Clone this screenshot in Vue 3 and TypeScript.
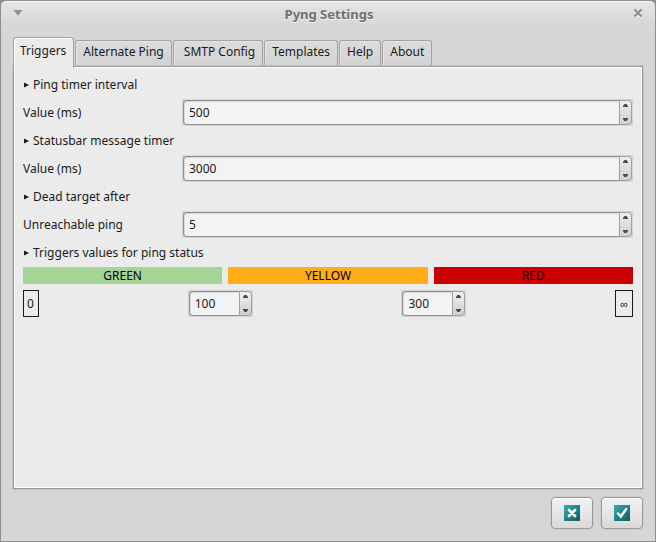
<script setup lang="ts">
import { ref } from 'vue'

interface Setting {
  id: string
  heading: string
  label: string
  value: number
}

const tabs = ['Triggers', 'Alternate Ping', '\u00a0SMTP Config', 'Templates', 'Help', 'About']
const active = ref(tabs[0])

const settings = ref<Setting[]>([
  { id: 'ping-timer', heading: 'Ping timer interval', label: 'Value (ms)', value: 500 },
  { id: 'status-timer', heading: 'Statusbar message timer', label: 'Value (ms)', value: 3000 },
  { id: 'dead-after', heading: 'Dead target after', label: 'Unreachable ping', value: 5 },
])

const thresholds = ref([
  { label: 'Green to yellow threshold', value: 100 },
  { label: 'Yellow to red threshold', value: 300 },
])

function step(item: { value: number }, amount: number) {
  item.value = Math.max(0, item.value + amount)
}
</script>

<template>
  <main class="window">
    <header class="titlebar">
      <button class="title-button" type="button" aria-label="Window menu">
        <svg width="10" height="6" viewBox="0 0 10 6"><path d="M0.500 0H9.500L5 5.500Z" fill="#8f8f8f" /></svg>
      </button>
      <h1>Pyng Settings</h1>
      <button class="title-button" type="button" aria-label="Close">
        <svg width="10" height="10" viewBox="0 0 10 10">
          <path d="M2 3L8 9M8 3L2 9" stroke="#fff" stroke-width="2.400" />
          <path d="M1.500 1.500L8.500 8.500M8.500 1.500L1.500 8.500" stroke="#8f8f8f" stroke-width="2.400" />
        </svg>
      </button>
    </header>

    <div class="content">
      <nav class="tabs" role="tablist">
        <button
          v-for="tab in tabs"
          :key="tab"
          class="tab"
          :class="{ selected: tab === active }"
          type="button"
          role="tab"
          :aria-selected="tab === active"
          @click="active = tab"
        >{{ tab }}</button>
      </nav>

      <section class="panel" role="tabpanel">
        <template v-for="item in settings" :key="item.id">
          <h2><svg width="5" height="6" viewBox="0 0 5 6"><path d="M0 0.500L5 3L0 5.500Z" fill="#1a1a1a" /></svg>{{ item.heading }}</h2>
          <div class="row">
            <label :for="item.id">{{ item.label }}</label>
            <div class="spin">
              <input :id="item.id" v-model.number="item.value" type="text" inputmode="numeric" />
              <div class="steppers">
                <button type="button" aria-label="Increase" @click="step(item, 1)">
                  <svg width="5" height="3" viewBox="0 0 5 3"><path d="M1.500 0H3.500L5 2V3H0V2Z" fill="#4a4a4a" /></svg>
                </button>
                <button type="button" aria-label="Decrease" @click="step(item, -1)">
                  <svg width="5" height="3" viewBox="0 0 5 3"><path d="M0 0H5V1L3.500 3H1.500L0 1Z" fill="#4a4a4a" /></svg>
                </button>
              </div>
            </div>
          </div>
        </template>

        <h2><svg width="5" height="6" viewBox="0 0 5 6"><path d="M0 0.500L5 3L0 5.500Z" fill="#1a1a1a" /></svg>Triggers values for ping status</h2>
        <div class="bands">
          <span class="green">GREEN</span>
          <span class="yellow">YELLOW</span>
          <span class="red">RED</span>
        </div>
        <div class="limits">
          <span class="bound">0</span>
          <div v-for="item in thresholds" :key="item.label" class="spin small">
            <input v-model.number="item.value" type="text" inputmode="numeric" :aria-label="item.label" />
            <div class="steppers">
              <button type="button" aria-label="Increase" @click="step(item, 1)">
                <svg width="5" height="3" viewBox="0 0 5 3"><path d="M1.500 0H3.500L5 2V3H0V2Z" fill="#4a4a4a" /></svg>
              </button>
              <button type="button" aria-label="Decrease" @click="step(item, -1)">
                <svg width="5" height="3" viewBox="0 0 5 3"><path d="M0 0H5V1L3.500 3H1.500L0 1Z" fill="#4a4a4a" /></svg>
              </button>
            </div>
          </div>
          <span class="bound infinity">∞</span>
        </div>
      </section>

      <footer class="actions">
        <button class="action" type="button" aria-label="Cancel">
          <svg width="16" height="16" viewBox="0 0 16 16">
            <defs>
              <linearGradient id="teal-cancel" x1="0" y1="0" x2="1" y2="1">
                <stop offset="0" stop-color="#2fb0ae" /><stop offset="1" stop-color="#175858" />
              </linearGradient>
            </defs>
            <rect width="16" height="16" fill="url(#teal-cancel)" />
            <path d="M5 5L11 11M11 5L5 11" stroke="#fff" stroke-width="2.800" stroke-linecap="round" />
          </svg>
        </button>
        <button class="action" type="button" aria-label="Apply">
          <svg width="16" height="16" viewBox="0 0 16 16">
            <defs>
              <linearGradient id="teal-apply" x1="0" y1="0" x2="1" y2="1">
                <stop offset="0" stop-color="#2fb0ae" /><stop offset="1" stop-color="#175858" />
              </linearGradient>
            </defs>
            <rect width="16" height="16" fill="url(#teal-apply)" />
            <path d="M4 8.500L6.800 11.500L12.200 4" fill="none" stroke="#fff" stroke-width="2.400" stroke-linecap="round" />
          </svg>
        </button>
      </footer>
    </div>
  </main>
</template>

<style>
body {
  background: #8c8c8c;
}
</style>

<style scoped>
.window {
  box-sizing: border-box;
  display: flex;
  flex-direction: column;
  min-height: 100vh;
  border: 1px solid #8e8e8e;
  border-radius: 6px 6px 0 0;
  background: linear-gradient(#e6e6e6, #d6d6d6 25px);
  box-shadow: inset 0 1px #fafafa;
  color: #1a1a1a;
  font: 12px/17px "Noto Sans", sans-serif;
}

button,
input {
  margin: 0;
  padding: 0;
  border: 0;
  background: none;
  color: inherit;
  font: inherit;
}

svg {
  display: block;
}

.titlebar {
  display: flex;
  align-items: center;
  justify-content: space-between;
  height: 24px;
  padding: 0 12px;
}

.title-button {
  display: flex;
}

h1 {
  margin: 0;
  padding: 2px 0 0 2px;
  color: #707070;
  font-size: 13px;
  font-weight: 700;
  line-height: 18px;
  text-shadow: 0 1px #f4f4f4;
}

.content {
  display: flex;
  flex: 1;
  flex-direction: column;
  padding: 12px;
}

.tabs {
  display: flex;
  align-items: flex-end;
  gap: 1px;
}

.tab {
  box-sizing: border-box;
  height: 26px;
  padding: 0 7px 4px;
  border: 1px solid #a2a2a2;
  border-bottom: 0;
  border-radius: 3px 3px 0 0;
  background: linear-gradient(#dcdcdc, #d2d2d2);
  box-shadow: inset 1px 1px #e6e6e6;
  white-space: nowrap;
}

.tab.selected {
  position: relative;
  height: 31px;
  margin-bottom: -2px;
  padding: 0 7px 5px 6px;
  background: #ebebeb;
  box-shadow: inset 1px 1px #fff;
}

.panel {
  display: flex;
  flex: 1;
  flex-direction: column;
  gap: 6px;
  padding: 9px 9px 8px;
  border: 1px solid #999;
  background: #ebebeb;
  box-shadow: inset 0 0 0 1px #fff, 0 0 0 1px #c4c4c4;
}

h2 {
  display: flex;
  align-items: center;
  gap: 4px;
  margin: 0;
  padding-left: 1px;
  font: inherit;
}

.row {
  display: flex;
  align-items: center;
  gap: 6px;
}

label {
  flex: 0 0 153px;
}

.spin {
  box-sizing: border-box;
  display: flex;
  flex: 1;
  min-width: 0;
  height: 27px;
  border: 1px solid #d4d4d4;
  background: #d4d4d4;
}

.spin.small {
  flex: 0 0 65px;
}

.spin input {
  box-sizing: border-box;
  flex: 1;
  min-width: 0;
  padding: 0 5px;
  border: 1px solid #8f8f8f;
  border-right: 0;
  border-radius: 4px 0 0 4px;
  background: #f3f3f3;
  box-shadow: inset 1px 1px #d9d9d9;
}

.steppers {
  display: flex;
  flex: 0 0 11px;
  flex-direction: column;
  border: 1px solid #a0a0a0;
  border-radius: 0 4px 4px 0;
  background: linear-gradient(#efefef, #cfcfcf);
}

.steppers button {
  display: flex;
  flex: 1;
  align-items: flex-start;
  justify-content: center;
  padding: 3px 0;
}

.steppers button + button {
  align-items: flex-end;
}

.bands {
  display: grid;
  grid-template-columns: repeat(3, 1fr);
  gap: 6px;
  color: #000;
  text-align: center;
}

.green {
  background: #a5d596;
}

.yellow {
  background: #ffae1a;
}

.red {
  background: #cc0000;
}

.limits {
  display: flex;
  justify-content: space-between;
}

.bound {
  box-sizing: border-box;
  min-width: 16px;
  height: 27px;
  padding: 4px 3px;
  border: 1px solid #1a1a1a;
}

.infinity {
  padding: 4px;
  font-size: 11px;
}

.actions {
  display: flex;
  justify-content: flex-end;
  gap: 8px;
  padding-top: 8px;
}

.action {
  box-sizing: border-box;
  display: flex;
  align-items: center;
  justify-content: center;
  width: 42px;
  height: 32px;
  border: 1px solid #9a9a9a;
  border-radius: 4px;
  background: linear-gradient(#f3f3f3, #d9d9d9);
  box-shadow: inset 0 1px #fff, 0 0 0 1px #cacaca;
}
</style>
